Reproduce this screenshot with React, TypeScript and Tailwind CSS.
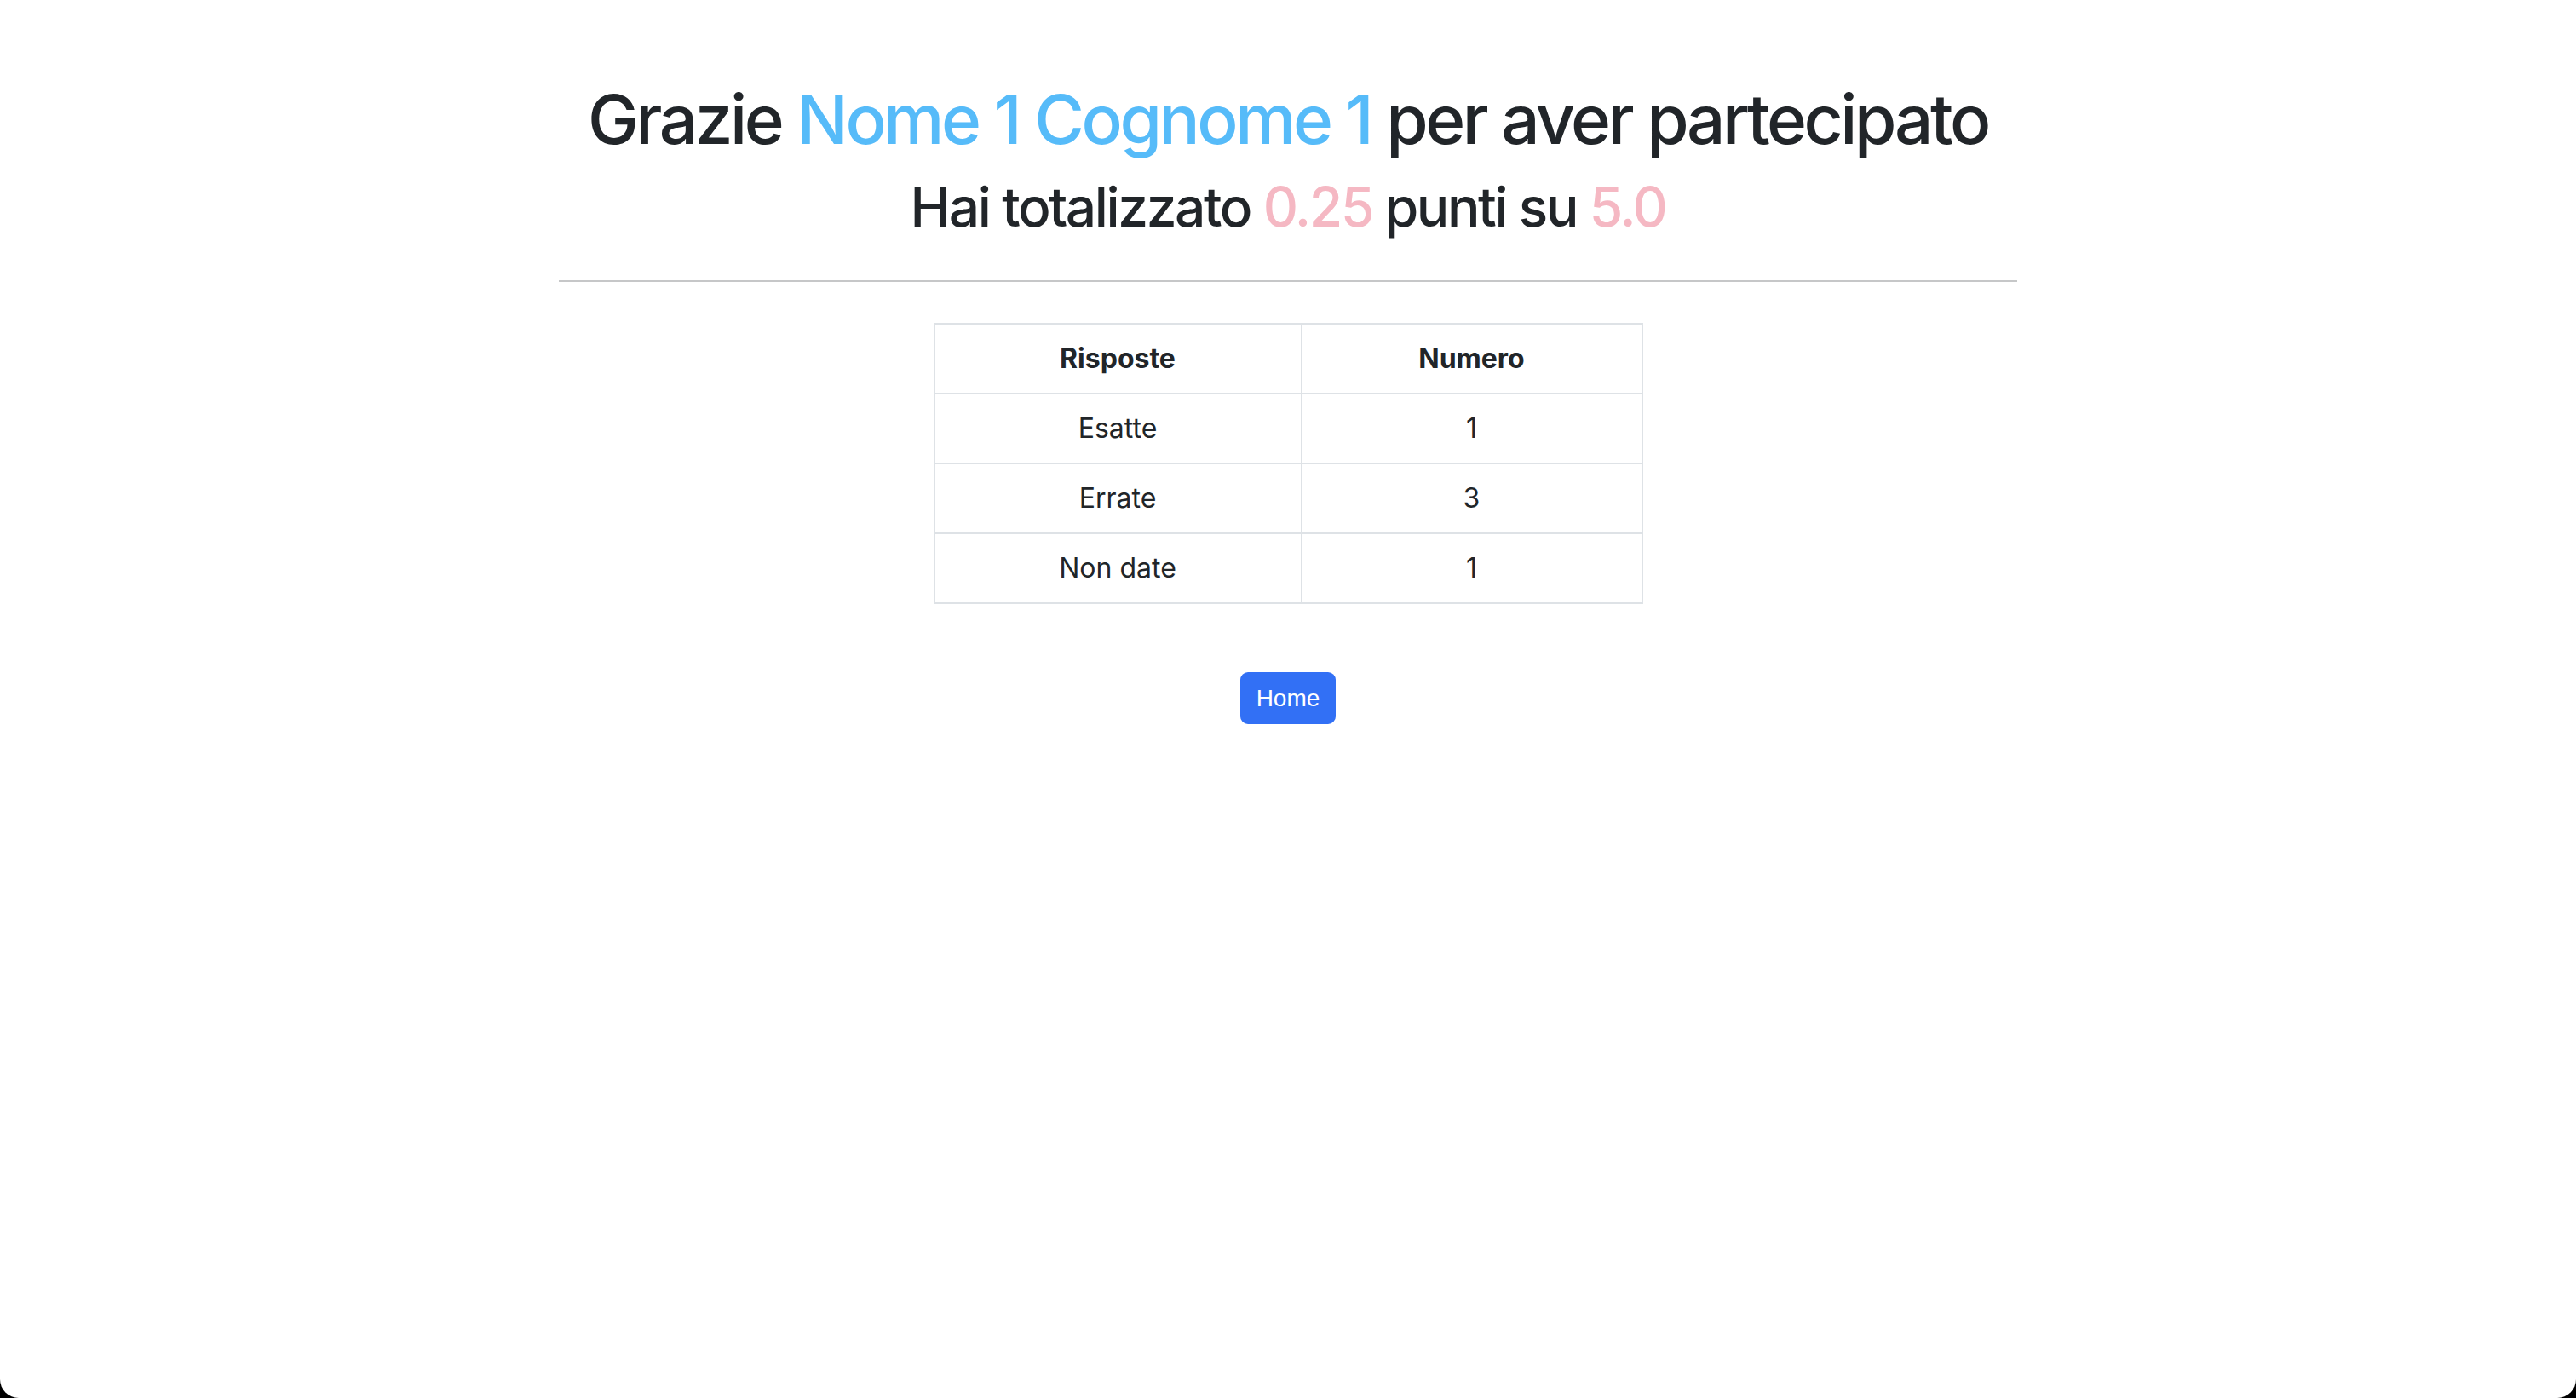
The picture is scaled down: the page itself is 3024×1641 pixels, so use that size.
const rows = [
  { label: "Esatte", value: 1 },
  { label: "Errate", value: 3 },
  { label: "Non date", value: 1 },
];

export default function App() {
  return (
    <div className="bg-black">
      <div className="flex h-[1641px] flex-col items-center rounded-b-[22px] bg-white font-['Inter','Noto_Sans',sans-serif] text-[#212529]">
        <h1 className="mt-[92px] text-[80px] leading-[96px] font-medium tracking-[-3.4px]">
          Grazie <span className="text-[#56bbf9]">Nome 1 Cognome 1</span> per aver partecipato
        </h1>
        <h2 className="mt-[16px] text-[64px] leading-[77px] font-medium tracking-[-2.4px]">
          Hai totalizzato <span className="text-[#f5b8c3]">0.25</span> punti su{" "}
          <span className="text-[#f5b8c3]">5.0</span>
        </h2>
        <hr className="mt-[48px] w-[1712px] border-t-2 border-[#c6c7c8]" />

        <table className="mt-[48px] border-collapse text-center text-[32px] leading-[48px]">
          <thead>
            <tr>
              <th className="w-[431px] border-2 border-[#dee2e6] py-[16px] font-bold">Risposte</th>
              <th className="w-[400px] border-2 border-[#dee2e6] py-[16px] font-bold">Numero</th>
            </tr>
          </thead>
          <tbody>
            {rows.map((r) => (
              <tr key={r.label}>
                <td className="border-2 border-[#dee2e6] py-[16px]">{r.label}</td>
                <td className="border-2 border-[#dee2e6] py-[16px]">{r.value}</td>
              </tr>
            ))}
          </tbody>
        </table>

        <button className="mt-[80px] h-[61px] w-[112px] rounded-[9px] bg-[#3270f5] font-['Liberation_Sans',Arial,sans-serif] text-[28px] text-white">
          Home
        </button>
      </div>
    </div>
  );
}
